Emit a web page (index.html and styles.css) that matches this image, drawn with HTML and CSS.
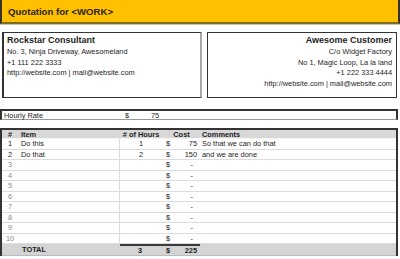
FILE: index.html
```html
<!DOCTYPE html>
<html lang="en">
<head>
  <meta charset="UTF-8" />
  <title>Quotation</title>
  <link rel="stylesheet" href="styles.css">
</head>
<body>
  <div class="banner">Quotation for &lt;WORK&gt;</div>

  <div class="parties">
    <div class="party from">
      <div class="name">Rockstar Consultant</div>
      <div>No. 3, Ninja Driveway, Awesomeland</div>
      <div>+1 111 222 3333</div>
      <div>http://website.com | mail@website.com</div>
    </div>
    <div class="party to">
      <div class="name">Awesome Customer</div>
      <div>C/o Widget Factory</div>
      <div>No 1, Magic Loop, La la land</div>
      <div>+1 222 333 4444</div>
      <div>http://website.com | mail@website.com</div>
    </div>
  </div>

  <div class="rate">
    <span class="rate-label">Hourly Rate</span>
    <span class="rate-cur">$</span>
    <span class="rate-val">75</span>
  </div>

  <div class="quote">
    <div class="row head">
      <div class="c-num">#</div>
      <div class="c-item">Item</div>
      <div class="c-hours">#&nbsp;of Hours</div>
      <div class="c-cost center">Cost</div>
      <div class="c-note">Comments</div>
    </div>
    <div id="rows"></div>
    <div class="row total">
      <div class="c-num"></div>
      <div class="c-item">TOTAL</div>
      <div class="c-hours">3</div>
      <div class="c-cost"><span>$</span><span>225</span></div>
      <div class="c-note"></div>
    </div>
  </div>

  <script>
    const items = [
      { item: 'Do this', hours: 1, cost: '75', note: 'So that we can do that' },
      { item: 'Do that', hours: 2, cost: '150', note: 'and we are done' }
    ];

    const rows = document.getElementById('rows');
    for (let i = 0; i < 10; i++) {
      const it = items[i] || { item: '', hours: '', cost: '-', note: '' };
      const row = document.createElement('div');
      row.className = 'row' + (items[i] ? '' : ' empty');
      row.innerHTML =
        `<div class="c-num">${i + 1}</div>` +
        `<div class="c-item">${it.item}</div>` +
        `<div class="c-hours">${it.hours}</div>` +
        `<div class="c-cost"><span>$</span><span class="amt">${it.cost}</span></div>` +
        `<div class="c-note">${it.note}</div>`;
      rows.appendChild(row);
    }
  </script>
</body>
</html>
```

FILE: styles.css
```css
* {
  box-sizing: border-box;
}

body {
  margin: 0;
  width: 400px;
  font-family: 'Liberation Sans', Arial, sans-serif;
  font-size: 7.4px;
  color: #1e1e1e;
  background: #fff;
}

.banner {
  height: 24px;
  background: #ffc000;
  border-left: 2px solid #3a3220;
  border-right: 2px solid #3a3220;
  border-bottom: 2px solid #7d6a25;
  box-shadow: 0 1px 0 #c8c0a8;
  padding: 6px 0 0 6px;
  font-size: 9.6px;
  font-weight: 700;
  color: #2a2414;
}

.parties {
  display: flex;
  gap: 5px;
  margin-top: 8px;
  padding: 0 3px 0 2px;
}

.party {
  height: 66px;
  border: 1px solid #333;
  padding: 2px 3px;
  line-height: 10.5px;
}

.party.from {
  width: 200px;
  border-left-width: 2px;
  border-right: 2px solid #a8a8a8;
}

.party.to {
  flex: 1;
  text-align: right;
  padding-right: 4px;
}

.party .name {
  font-size: 9px;
  font-weight: 700;
  line-height: 11px;
  margin-bottom: 1px;
}

.rate {
  display: grid;
  grid-template-columns: 121px 26px 1fr;
  height: 11px;
  margin: 11px 2px 0 0;
  border-top: 2px solid #333;
  border-bottom: 1px solid #999;
  border-left: 2px solid #333;
  border-right: 2px solid #333;
  line-height: 9px;
  padding-left: 2px;
}

.quote {
  margin: 8px 2px 0 0;
  border-left: 2px solid #333;
  border-right: 2px solid #333;
}

.row {
  display: grid;
  grid-template-columns: 16px 102px 42px 38px 1fr;
  height: 10.5px;
  line-height: 10px;
  border-bottom: 1px solid #dcdcdc;
}

.row > div {
  white-space: nowrap;
  overflow: hidden;
}

.head {
  height: 11px;
  background: #d8d8d8;
  border-top: 2px solid #333;
  border-bottom: 1px solid #f4f4f4;
  font-weight: 700;
  line-height: 9px;
}

.c-num {
  text-align: center;
}

.c-item {
  padding-left: 3px;
}

.row:not(.head) .c-item {
  border-right: 1px solid #dcdcdc;
}

.c-hours {
  text-align: center;
}

.c-cost {
  display: flex;
  justify-content: space-between;
  padding: 0 3px 0 4px;
}

.c-cost.center {
  justify-content: center;
}

.c-note {
  padding-left: 2px;
}

.empty .c-num {
  color: #8a8a8a;
}

.empty .amt {
  padding-right: 4px;
}

.total {
  height: 12px;
  background: #d4d4d4;
  font-weight: 700;
  border-bottom: 1px solid #bbb;
  line-height: 11px;
}

.total .c-item {
  padding-left: 4px;
  border-right: none !important;
}

.total .c-hours,
.total .c-cost {
  border-top: 2px solid #3a3a3a;
  line-height: 9px;
}

.total .c-hours {
  text-align: right;
  padding-right: 20px;
}
```
